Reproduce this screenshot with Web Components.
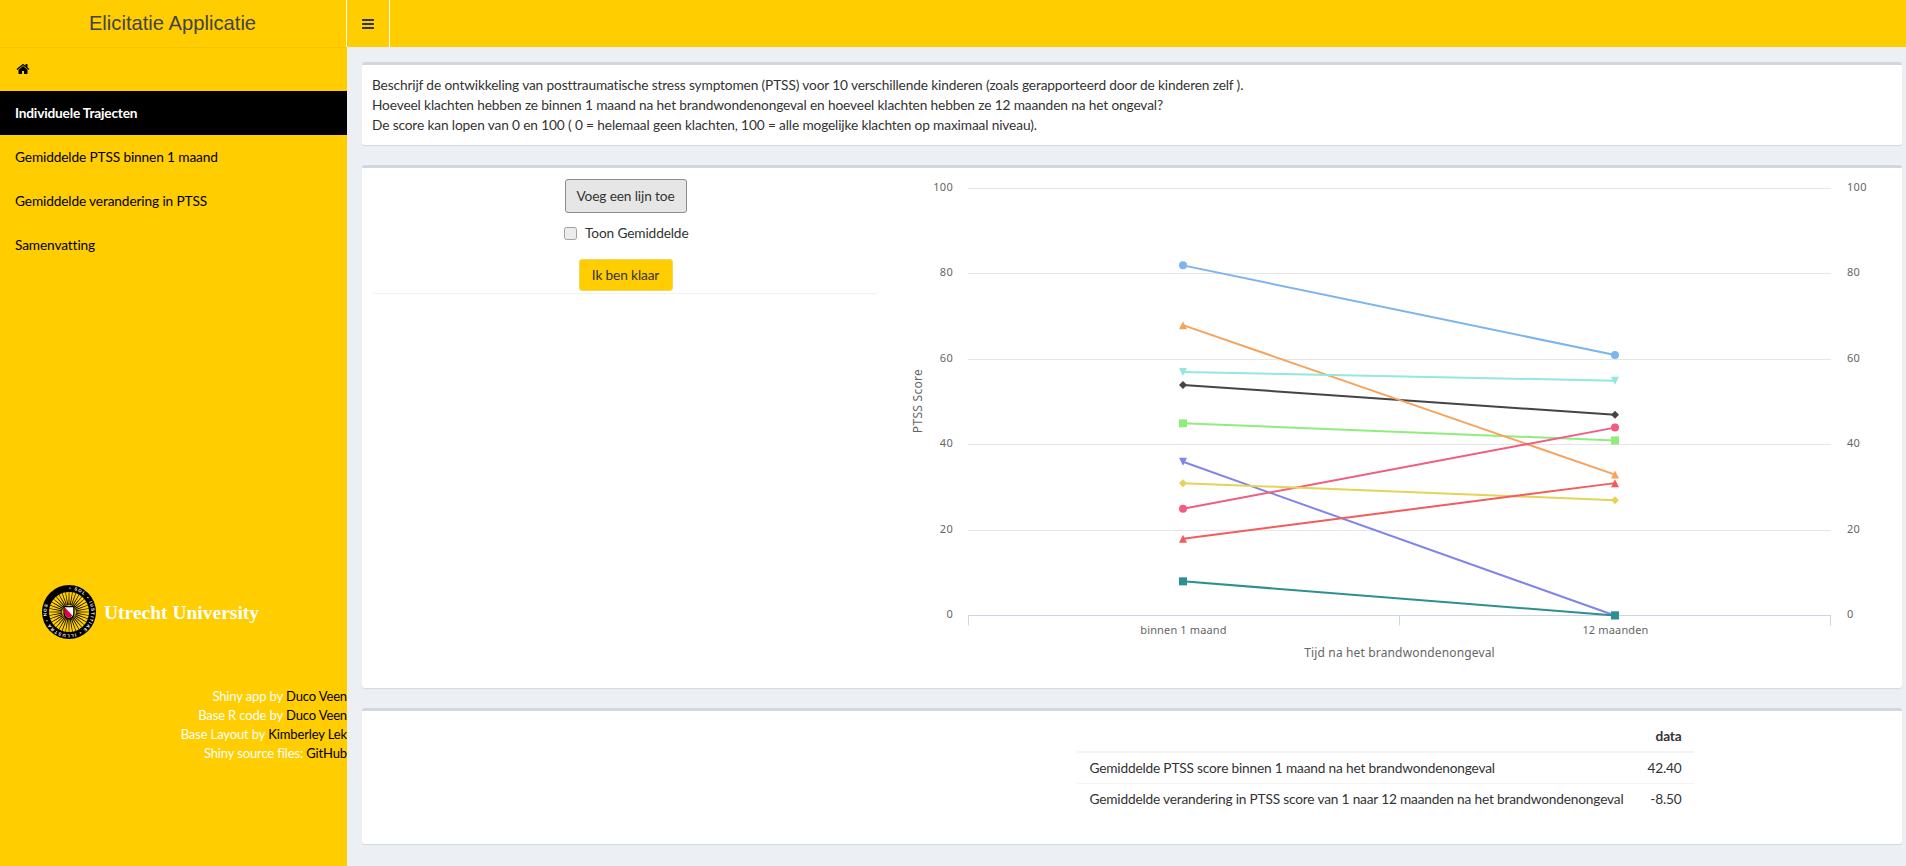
<!DOCTYPE html>
<html lang="nl"><head><meta charset="utf-8"><title>Elicitatie Applicatie</title>
<style>
html,body{margin:0;padding:0;height:100%;overflow:hidden;background:#ecf0f5}
body{font:13.7px/20px Lato,"Noto Sans",sans-serif;letter-spacing:-.13px;color:#333}
</style></head><body>
<ui-app>
  <ui-header slot="header" title-text="Elicitatie Applicatie"></ui-header>
  <ui-sidebar slot="sidebar">
    <nav-item home></nav-item>
    <nav-item active>Individuele Trajecten</nav-item>
    <nav-item>Gemiddelde PTSS binnen 1 maand</nav-item>
    <nav-item>Gemiddelde verandering in PTSS</nav-item>
    <nav-item>Samenvatting</nav-item>
    <uu-logo slot="logo"></uu-logo>
    <credit-line slot="credits" label="Shiny app by">Duco Veen</credit-line>
    <credit-line slot="credits" label="Base R code by">Duco Veen</credit-line>
    <credit-line slot="credits" label="Base Layout by">Kimberley Lek</credit-line>
    <credit-line slot="credits" label="Shiny source files:">GitHub</credit-line>
  </ui-sidebar>
  <info-box style="--box-h:83px">
    Beschrijf de ontwikkeling van posttraumatische stress symptomen (PTSS) voor 10 verschillende kinderen (zoals gerapporteerd door de kinderen zelf ).<br>
    Hoeveel klachten hebben ze binnen 1 maand na het brandwondenongeval en hoeveel klachten hebben ze 12 maanden na het ongeval?<br>
    De score kan lopen van 0 en 100 ( 0 = helemaal geen klachten, 100 = alle mogelijke klachten op maximaal niveau).
  </info-box>
  <info-box style="--box-h:523px">
    <two-col>
      <control-panel slot="left"></control-panel>
      <ptss-chart slot="right"></ptss-chart>
    </two-col>
  </info-box>
  <info-box style="--box-h:136px">
    <two-col>
      <summary-table slot="right"></summary-table>
    </two-col>
  </info-box>
</ui-app>
<script>
function def(name, html, init){
  customElements.define(name, class extends HTMLElement{
    constructor(){super();this.attachShadow({mode:'open'}).innerHTML=html;}
    connectedCallback(){ if(init) init.call(this,this.shadowRoot); }
  });
}
const BARS='M1664 1344v128q0 26-19 45t-45 19h-1408q-26 0-45-19t-19-45v-128q0-26 19-45t45-19h1408q26 0 45 19t19 45zm0-512v128q0 26-19 45t-45 19h-1408q-26 0-45-19t-19-45v-128q0-26 19-45t45-19h1408q26 0 45 19t19 45zm0-512v128q0 26-19 45t-45 19h-1408q-26 0-45-19t-19-45v-128q0-26 19-45t45-19h1408q26 0 45 19t19 45z';
const HOME='M1472 992v480q0 26-19 45t-45 19h-384v-384h-256v384h-384q-26 0-45-19t-19-45v-480q0-1 .5-3t.5-3l575-474 575 474q1 2 1 6zm223-69l-62 74q-8 9-21 11h-3q-13 0-21-7l-692-577-692 577q-12 8-24 7-13-2-21-11l-62-74q-8-10-7-23.5t11-21.5l719-599q32-26 76-26t76 26l244 204v-195q0-14 9-23t23-9h192q14 0 23 9t9 23v408l219 182q10 8 11 21.5t-7 23.5z';

def('ui-app',`<style>
:host{display:grid;grid-template-columns:347px 1fr;grid-template-rows:47px 1fr;height:866px;width:1906px;overflow:hidden;background:#ecf0f5}
::slotted(ui-header){grid-column:1/3}
main{padding:15px 4px 0 15px;display:flex;flex-direction:column;gap:20px;min-width:0}
</style><slot name="header"></slot><slot name="sidebar"></slot><main><slot></slot></main>`);

def('ui-header',`<style>
:host{display:flex;background:#ffcd00;height:47px}
.logo{box-sizing:border-box;width:347px;border-right:1px solid #fff;text-align:center;font:20.2px/47px "Liberation Sans",Arial,sans-serif;letter-spacing:0;color:#444;padding-right:1px}
.toggle{box-sizing:border-box;width:43px;border-right:1px solid #fff;display:flex;align-items:center;justify-content:center;padding-right:1px}
svg{width:14px;height:14px;fill:#333;display:block}
</style><div class="logo"></div><div class="toggle"><svg viewBox="0 0 1792 1792"><path d="${BARS}"/></svg></div>`,
function(r){r.querySelector('.logo').textContent=this.getAttribute('title-text');});

def('ui-sidebar',`<style>
:host{display:flex;flex-direction:column;background:#ffcd00;height:819px;overflow:hidden;box-shadow:inset 0 1px 0 #f5c400}
.logo{padding:318px 0 0 42px;display:block}
.credits{margin-top:48px;text-align:right;font-size:13px;line-height:19px;color:#fff}
</style><slot></slot><div class="logo"><slot name="logo"></slot></div><div class="credits"><slot name="credits"></slot></div>`);

def('nav-item',`<style>
:host{display:flex;align-items:center;height:44px;box-sizing:border-box;padding-left:15px;color:#000}
:host([active]){background:#000;color:#fff;font-weight:700;letter-spacing:-.19px}
svg{width:14px;height:14px;fill:#000;display:block;margin-left:1px}
</style><slot></slot>`,
function(r){ if(this.hasAttribute('home')&&!r.querySelector('svg')) r.innerHTML+=`<svg viewBox="0 0 1792 1792"><path d="${HOME}"/></svg>`; });

def('credit-line',`<style>
:host{display:block;white-space:nowrap;color:#fff}
a{color:#000;text-decoration:none}
</style><span class="l"></span> <a><slot></slot></a>`,
function(r){r.querySelector('.l').textContent=this.getAttribute('label');});

def('uu-logo',`<style>
:host{display:flex;align-items:center;height:54px}
svg{width:54px;height:54px;display:block}
span{font:bold 19.5px/1 "Liberation Serif","Times New Roman",serif;letter-spacing:0;color:#fff;margin-left:8px;position:relative;top:1px;white-space:nowrap}
</style><svg viewBox="-27 -27 54 54">
<circle r="27" fill="#000"/><g class="rays"></g>
<defs><path id="ring" d="M0 -22.4A22.4 22.4 0 1 1 0 22.4A22.4 22.4 0 1 1 0 -22.4"/></defs>
<text font-family="Liberation Sans" font-size="4.4" font-weight="700" fill="#fff" letter-spacing="1.1"><textPath href="#ring">• SOL • IUSTITIAE • ILLUSTRA • NOS</textPath></text>
<path d="M-5.6-6H5.6V2Q5.6 6 0 7.6Q-5.6 6-5.6 2Z" fill="#000"/>
<path d="M-4.2-4.7H4.2V1.7Q4.2 4.6 0 5.9Q-4.2 4.6-4.2 1.7Z" fill="#fff"/>
<path d="M-4.2-4.7L3.4 3.6Q2.2 5.1 0 5.9Q-4.2 4.6-4.2 1.7Z" fill="#e2003c"/>
</svg><span>Utrecht University</span>`,
function(r){
  let s='';const n=36;
  for(let i=0;i<n;i++){
    const a=(i+.5)*2*Math.PI/n, w=(Math.PI/n)*.85, R=20, r0=6;
    const p=(rad,t)=>`${(rad*Math.sin(t)).toFixed(2)} ${(-rad*Math.cos(t)).toFixed(2)}`;
    s+=`<path d="M${p(r0,a)}L${p(R,a-w)}L${p(R,a+w)}Z" fill="#ffcd00"/>`;
  }
  r.querySelector('.rays').innerHTML=s+'<circle r="7" fill="#ffcd00"/>';
});

def('info-box',`<style>
:host{display:block;box-sizing:border-box;height:var(--box-h);background:#fff;border-top:3px solid #d2d6de;border-radius:3px;box-shadow:0 1px 1px rgba(0,0,0,.1);padding:10px}
</style><slot></slot>`);

def('two-col',`<style>
:host{display:grid;grid-template-columns:507px 1fr}
</style><div><slot name="left"></slot></div><div><slot name="right"></slot></div>`);

def('control-panel',`<style>
:host{display:flex;flex-direction:column;align-items:center;height:115px;box-sizing:border-box;padding-top:1px;border-radius:3px;box-shadow:0 1px 1px rgba(0,0,0,.06)}
button{font:inherit;letter-spacing:inherit;box-sizing:border-box;border-radius:3px;color:#333;cursor:pointer}
.add{height:34px;width:122px;padding:0;background:#e6e6e6;border:1px solid #8c8c8c}
label{display:flex;align-items:center;gap:8px;margin-top:10px;height:20px;white-space:nowrap;width:123px}
input{appearance:none;-webkit-appearance:none;margin:0;width:13px;height:13px;flex:none;box-sizing:border-box;border:1px solid #a0a0a0;border-radius:2.5px;background:#ececec}
.done{height:32px;width:94px;margin-top:16px;padding:0;background:#ffcd00;border:1px solid #f2d75f}
</style><button class="add">Voeg een lijn toe</button>
<label><input type="checkbox"><span>Toon Gemiddelde</span></label>
<button class="done">Ik ben klaar</button>`);

def('ptss-chart',`<style>
:host{display:block;width:1013px;height:500px}
svg{display:block;width:1013px;height:500px}
text{font-family:"Noto Sans",sans-serif;font-size:11px;fill:#666;letter-spacing:.3px}
.x{letter-spacing:.15px}
.g{stroke:#e6e6e6;stroke-width:1}
.a{stroke:#ccd6eb;stroke-width:1}
</style><svg viewBox="879 178 1013 500"></svg>`,
function(r){
  const X0=1183,X1=1615,Y=v=>615.5-v*4.27;
  const gy={100:188.5,80:273.5,60:359.5,40:444.5,20:530.5};
  let s='';
  for(const v of [100,80,60,40,20]) s+=`<line class="g" x1="968" x2="1831" y1="${gy[v]}" y2="${gy[v]}"/>`;
  s+=`<line class="a" x1="968" x2="1831" y1="615.5" y2="615.5"/>`;
  for(const x of [968.5,1399.5,1830.5]) s+=`<line class="a" x1="${x}" x2="${x}" y1="615.5" y2="625.5"/>`;
  for(const v of [100,80,60,40,20,0]){
    const y=(gy[v]||615.5)+2.2;
    s+=`<text x="953" y="${y}" text-anchor="end">${v}</text><text x="1847" y="${y}">${v}</text>`;
  }
  s+=`<text class="x" x="1183.5" y="633.5" text-anchor="middle">binnen 1 maand</text>`;
  s+=`<text class="x" x="1615.5" y="633.5" text-anchor="middle">12 maanden</text>`;
  s+=`<text class="x" x="1399.5" y="656.5" text-anchor="middle" style="font-size:12px">Tijd na het brandwondenongeval</text>`;
  s+=`<text transform="translate(922 401) rotate(-90)" text-anchor="middle" style="font-size:12px">PTSS Score</text>`;
  const marker=(t,x,y,c)=>{
    const R=4;
    if(t=='c')return `<circle cx="${x}" cy="${y}" r="${R}" fill="${c}"/>`;
    if(t=='d')return `<path d="M${x} ${y-R}L${x+R} ${y}L${x} ${y+R}L${x-R} ${y}Z" fill="${c}"/>`;
    if(t=='s')return `<rect x="${x-R}" y="${y-R}" width="8" height="8" fill="${c}"/>`;
    if(t=='t')return `<path d="M${x} ${y-R}L${x+R} ${y+R}L${x-R} ${y+R}Z" fill="${c}"/>`;
    return `<path d="M${x-R} ${y-R}L${x+R} ${y-R}L${x} ${y+R}Z" fill="${c}"/>`;
  };
  const series=[['#7cb5ec','c',82,61],['#434348','d',54,47],['#90ed7d','s',45,41],['#f7a35c','t',68,33],['#8085e9','v',36,0],
    ['#f15c80','c',25,44],['#e4d354','d',31,27],['#2b908f','s',8,0],['#f45b5b','t',18,31],['#91e8e1','v',57,55]];
  for(const [c,t,a,b] of series){
    s+=`<line x1="${X0}" y1="${Y(a)}" x2="${X1}" y2="${Y(b)}" stroke="${c}" stroke-width="2"/>`;
    s+=marker(t,X0,Y(a),c)+marker(t,X1,Y(b),c);
  }
  r.querySelector('svg').innerHTML=s;
});

def('summary-table',`<style>
:host{display:flex;justify-content:center;height:113px;align-items:flex-start}
table{border-collapse:collapse;width:615px;letter-spacing:-.18px}
th,td{padding:5px 12px;line-height:20px;white-space:nowrap}
th{text-align:right;font-weight:700;border-bottom:2px solid #f4f4f4}
td{border-bottom:1px solid #f4f4f4}
tr:last-child td{border-bottom:0}
.n{text-align:right}
</style><table><thead><tr><th></th><th>data</th></tr></thead><tbody>
<tr><td>Gemiddelde PTSS score binnen 1 maand na het brandwondenongeval</td><td class="n">42.40</td></tr>
<tr><td>Gemiddelde verandering in PTSS score van 1 naar 12 maanden na het brandwondenongeval</td><td class="n">-8.50</td></tr>
</tbody></table>`);
</script>
</body></html>
